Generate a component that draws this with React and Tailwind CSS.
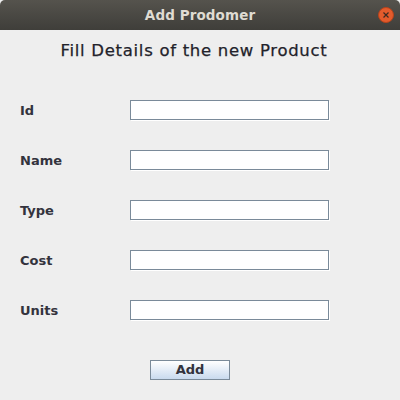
export default function App() {
  const rows = ["Id", "Name", "Type", "Cost", "Units"];
  return (
    <div className="w-[400px] h-[400px] bg-[#eeeeee] flex flex-col overflow-hidden" style={{ fontFamily: '"DejaVu Sans", sans-serif' }}>
      <div className="h-[30px] rounded-t-[5px] bg-gradient-to-b from-[#55534d] to-[#3f3e3a] flex items-center justify-center relative shrink-0">
        <span className="text-[13.5px] font-bold text-[#dfdbd2] tracking-[0.1px]">Add Prodomer</span>
        <div className="absolute right-[6px] top-[7px] w-[16px] h-[16px] rounded-full bg-[#e35b2c] border border-[#b8431b] flex items-center justify-center">
          <svg width="8" height="8" viewBox="0 0 8 8">
            <path d="M1.5 1.5 L6.5 6.5 M6.5 1.5 L1.5 6.5" stroke="#3b2a22" strokeWidth="1.2" />
          </svg>
        </div>
      </div>
      <div className="h-[39px] flex items-center justify-center pr-[12px] pt-[4px]">
        <span className="text-[16.5px] text-[#22222a] tracking-[0.7px] [-webkit-text-stroke:0.25px_#22222a]">Fill Details of the new Product</span>
      </div>
      <div className="flex flex-col gap-[30px] mt-[31px]">
        {rows.map((r) => (
          <div key={r} className="flex items-center h-[20px]">
            <span className="w-[130px] pl-[20px] pt-[1px] text-[13px] font-bold text-[#33333d]">{r}</span>
            <div className="w-[199px] h-[20px] bg-white border border-[#7a8a99] shadow-[1px_1px_0_#ffffff]" />
          </div>
        ))}
      </div>
      <div className="flex mt-[40px] pl-[150px]">
        <div className="w-[80px] h-[20px] border border-[#7a8a99] bg-gradient-to-b from-[#ffffff] to-[#c9daee] flex items-center justify-center">
          <span className="text-[13px] font-bold text-[#33333d]">Add</span>
        </div>
      </div>
    </div>
  );
}
